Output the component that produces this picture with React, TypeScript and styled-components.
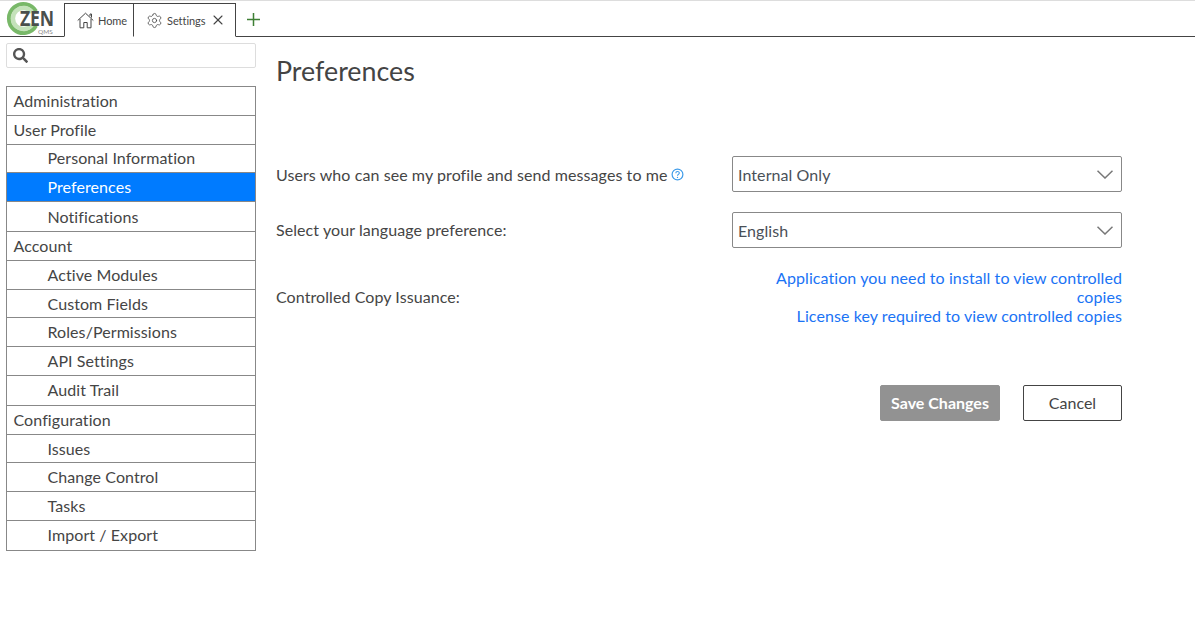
import React from 'react';
import styled, { createGlobalStyle } from 'styled-components';
import { Settings, X } from 'lucide-react';
import { FaSearch } from 'react-icons/fa';

const GlobalStyle = createGlobalStyle`
  html, body {
    margin: 0;
    padding: 0;
    background: #fff;
    font-family: Lato, "Open Sans", sans-serif;
    color: #444;
  }
  * {
    box-sizing: border-box;
  }
`;

const Page = styled.div`
  width: 1195px;
  height: 628px;
  overflow: hidden;
`;

const TabBar = styled.header`
  display: flex;
  align-items: flex-end;
  height: 37px;
  padding-left: 6px;
  border-top: 1px solid #ddd;
  border-bottom: 1px solid #444;
`;

const LogoWrap = styled.div`
  position: relative;
  width: 59px;
  height: 35px;
  flex: none;
`;

const LogoRing = styled.svg`
  position: absolute;
  left: 0;
  top: 0;
`;

const LogoWord = styled.span`
  position: absolute;
  left: 14px;
  top: 8px;
  font-family: "Open Sans", sans-serif;
  font-size: 22px;
  font-weight: 700;
  letter-spacing: -0.2px;
  line-height: 16px;
  color: #4a4f4c;
  transform: scaleX(0.8);
  transform-origin: left center;
`;

const LogoSub = styled.span`
  position: absolute;
  left: 32px;
  top: 27px;
  font-size: 6.5px;
  line-height: 7px;
  color: #888;
`;

const Tab = styled.div<{ $width: number }>`
  display: flex;
  align-items: center;
  gap: 4px;
  width: ${(p) => p.$width}px;
  height: 34px;
  margin-left: -1px;
  margin-bottom: -1px;
  padding: 0 0 0 12px;
  background: #fff;
  border: 1px solid #444;
  border-bottom-color: #fff;
  font-size: 11px;
  letter-spacing: -0.05px;
  color: #444;
`;

const TabClose = styled(X)`
  margin-left: 1px;
`;

const AddTab = styled.div`
  height: 34px;
  margin-left: 11px;
  display: flex;
  align-items: center;
`;

const Body = styled.div`
  display: grid;
  grid-template-columns: 250px 846px;
  column-gap: 20px;
  padding: 6px 0 0 6px;
`;

const SearchBox = styled.div`
  display: flex;
  align-items: center;
  height: 25px;
  padding-left: 6px;
  margin-bottom: 18px;
  border: 1px solid #ddd;
  border-radius: 2px;
  color: #555;
  font-size: 15px;
`;

const Menu = styled.nav`
  border: 1px solid #888;
  border-bottom: 0;
`;

const MenuRow = styled.div`
  display: flex;
  align-items: center;
  height: 28.8px;
  padding-left: 6.5px;
  padding-bottom: 1px;
  border-bottom: 1px solid #888;
  font-size: 16px;
  letter-spacing: 0.08px;
  color: #454545;
`;

const SubRow = styled(MenuRow)<{ $active?: boolean }>`
  height: 28.75px;
  padding-left: 40.5px;
  color: ${(p) => (p.$active ? '#fff' : '#454545')};
  background: ${(p) => (p.$active ? '#007bff' : '#fff')};
`;

const SubList = styled.div`
  & > :last-child {
    height: 30px;
  }
`;

const Content = styled.main``;

const Title = styled.h1`
  margin: 11px 0 0;
  font-size: 26.8px;
  font-weight: 400;
  line-height: 34px;
  color: #444;
`;

const FormRow = styled.div`
  display: grid;
  grid-template-columns: 456px 390px;
  align-items: center;
`;

const FirstRow = styled(FormRow)`
  margin-top: 68px;
`;

const SecondRow = styled(FormRow)`
  margin-top: 20px;
`;

const LinkRow = styled(FormRow)`
  margin-top: 20px;
`;

const Label = styled.label`
  display: flex;
  align-items: center;
  gap: 4px;
  font-size: 16px;
  letter-spacing: 0.08px;
  color: #454545;
`;

const LanguageLabel = styled(Label)`
  padding-bottom: 2px;
`;

const SelectBox = styled.div`
  display: flex;
  align-items: center;
  justify-content: space-between;
  height: 36px;
  padding: 1px 8px 0 5px;
  border: 1px solid #888;
  border-radius: 2px;
  font-size: 16px;
  letter-spacing: 0.08px;
  color: #495057;
`;

const Links = styled.div`
  padding-left: 40px;
  text-align: right;
  font-size: 16px;
  letter-spacing: 0.08px;
  line-height: 19px;
`;

const DocLink = styled.a`
  color: #1a73f5;
  text-decoration: none;
`;

const Actions = styled.div`
  display: flex;
  justify-content: flex-end;
  gap: 23px;
  margin-top: 60px;
`;

const Button = styled.button<{ $primary?: boolean }>`
  height: 36px;
  width: ${(p) => (p.$primary ? 120 : 99)}px;
  padding: 0 0 2px;
  border: 1px solid ${(p) => (p.$primary ? '#929292' : '#444')};
  border-radius: 2px;
  background: ${(p) => (p.$primary ? '#929292' : '#fff')};
  color: ${(p) => (p.$primary ? '#fff' : '#444')};
  font-family: inherit;
  font-size: 16px;
  font-weight: ${(p) => (p.$primary ? 700 : 400)};
`;

const menu = [
  { label: 'Administration', items: [] },
  {
    label: 'User Profile',
    items: ['Personal Information', 'Preferences', 'Notifications'],
  },
  {
    label: 'Account',
    items: ['Active Modules', 'Custom Fields', 'Roles/Permissions', 'API Settings', 'Audit Trail'],
  },
  {
    label: 'Configuration',
    items: ['Issues', 'Change Control', 'Tasks', 'Import / Export'],
  },
];

const HelpIcon = () => (
  <svg width="13" height="13" viewBox="0 0 13 13" fill="none">
    <circle cx="6.5" cy="6.5" r="5.4" stroke="#3d9be9" strokeWidth="1.2" />
    <path d="M4.8 5.2c0-2.2 3.5-2.2 3.5-.1 0 1.3-1.8 1.3-1.8 2.6" stroke="#3d9be9" strokeWidth="1.1" />
    <circle cx="6.5" cy="9.4" r=".7" fill="#3d9be9" />
  </svg>
);

const HomeIcon = () => (
  <svg width="17" height="17" viewBox="0 0 17 17" fill="none" stroke="#444" strokeWidth="1">
    <path d="M.7 8.500 8.500 1.200l7.800 7.300" />
    <path d="M13 4.200V2h1.500v3.600" />
    <path d="M3 7v8.800h3.800v-5.300h3.400v5.300H14V7" />
  </svg>
);

const PlusIcon = () => (
  <svg width="13" height="13" viewBox="0 0 13 13" fill="none" stroke="#3f7f35" strokeWidth="1.5">
    <path d="M6.500 0v13M0 6.500h13" />
  </svg>
);

const Chevron = () => (
  <svg width="16" height="9" viewBox="0 0 16 9" fill="none" stroke="#777" strokeWidth="1.5">
    <path d="M.5.700 8 8l7.500-7.300" />
  </svg>
);

const App = (): JSX.Element => {
  return (
    <Page>
      <GlobalStyle />
      <TabBar>
        <LogoWrap>
          <LogoRing width="59" height="35" viewBox="0 0 59 35" fill="none">
            <path d="M30 10.300A14.500 14.500 0 1 0 30 24.700" stroke="#78b868" strokeWidth="4" />
            <path d="M26 11.500A10.500 10.500 0 1 0 26 23.500" stroke="#c4e2ba" strokeWidth="4.500" />
          </LogoRing>
          <LogoWord>ZEN</LogoWord>
          <LogoSub>QMS</LogoSub>
        </LogoWrap>
        <Tab $width={70}>
          <HomeIcon />
          Home
        </Tab>
        <Tab $width={103}>
          <Settings size={17} strokeWidth={1.1} />
          Settings
          <TabClose size={16} strokeWidth={1.6} />
        </Tab>
        <AddTab>
          <PlusIcon />
        </AddTab>
      </TabBar>
      <Body>
        <aside>
          <SearchBox>
            <FaSearch />
          </SearchBox>
          <Menu>
            {menu.map((group) => (
              <React.Fragment key={group.label}>
                <MenuRow>{group.label}</MenuRow>
                {group.items.length > 0 && (
                  <SubList>
                    {group.items.map((item) => (
                      <SubRow key={item} $active={item === 'Preferences'}>
                        {item}
                      </SubRow>
                    ))}
                  </SubList>
                )}
              </React.Fragment>
            ))}
          </Menu>
        </aside>
        <Content>
          <Title>Preferences</Title>
          <FirstRow>
            <Label>
              Users who can see my profile and send messages to me
              <HelpIcon />
            </Label>
            <SelectBox>
              Internal Only
              <Chevron />
            </SelectBox>
          </FirstRow>
          <SecondRow>
            <LanguageLabel>Select your language preference:</LanguageLabel>
            <SelectBox>
              English
              <Chevron />
            </SelectBox>
          </SecondRow>
          <LinkRow>
            <Label>Controlled Copy Issuance:</Label>
            <Links>
              <DocLink href="#">Application you need to install to view controlled copies</DocLink>
              <br />
              <DocLink href="#">License key required to view controlled copies</DocLink>
            </Links>
          </LinkRow>
          <Actions>
            <Button $primary>Save Changes</Button>
            <Button>Cancel</Button>
          </Actions>
        </Content>
      </Body>
    </Page>
  );
};

export default App;
